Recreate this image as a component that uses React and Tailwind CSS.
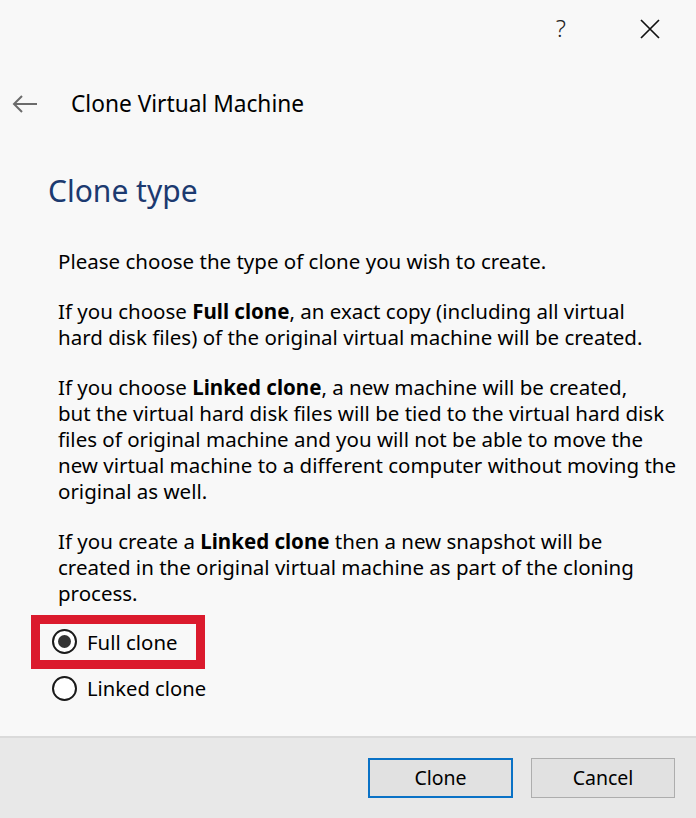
import React, { useState } from "react";

const Radio = ({ checked }) => (
  <span className="w-[25px] h-[25px] rounded-full border-2 border-[#1a1a1a] bg-white flex items-center justify-center shrink-0">
    {checked && <span className="w-[13px] h-[13px] rounded-full bg-[#333333]" />}
  </span>
);

export default function App() {
  const [type, setType] = useState("full");

  return (
    <div className="w-[696px] h-[818px] bg-[#f8f8f8] flex flex-col text-black font-['Noto_Sans',sans-serif]">
      {/* title bar */}
      <div className="h-[55px] flex justify-end items-center pr-[36px] gap-[74px]">
        <span className="text-[24px] font-light text-[#222]">?</span>
        <svg width="20" height="20" viewBox="0 0 20 20" className="mt-[2px]">
          <path d="M1 1 L19 19 M19 1 L1 19" stroke="#111" strokeWidth="1.7" fill="none" />
        </svg>
      </div>

      {/* header */}
      <div className="flex items-center mt-[35px] h-[28px]">
        <svg width="26" height="18" viewBox="0 0 26 18" className="ml-[12px]">
          <path d="M25 9 H2 M10 1 L2 9 L10 17" stroke="#6b6b6b" strokeWidth="2" fill="none" />
        </svg>
        <span className="ml-[33px] text-[22.7px]">Clone Virtual Machine</span>
      </div>

      <h1 className="ml-[48px] mt-[55px] text-[30px] leading-[36px] text-[#1c3a70]">Clone type</h1>

      <div className="ml-[58px] mt-[39px] text-[20.5px] leading-[26px] pr-[6px] whitespace-nowrap">
        <p>Please choose the type of clone you wish to create.</p>
        <p className="mt-[24px]">
          If you choose <b>Full clone</b>, an exact copy (including all virtual
          <br />
          hard disk files) of the original virtual machine will be created.
        </p>
        <p className="mt-[24px]">
          If you choose <b>Linked clone</b>, a new machine will be created,
          <br />
          but the virtual hard disk files will be tied to the virtual hard disk
          <br />
          files of original machine and you will not be able to move the
          <br />
          new virtual machine to a different computer without moving the
          <br />
          original as well.
        </p>
        <p className="mt-[24px]">
          If you create a <b>Linked clone</b> then a new snapshot will be
          <br />
          created in the original virtual machine as part of the cloning
          <br />
          process.
        </p>
      </div>

      <div className="ml-[31px] mt-[9px] w-[174px] h-[54px] border-[9px] border-[#db1a2d] flex items-center pl-[12px]">
        <button className="flex items-center gap-[10px] text-[20.4px]" onClick={() => setType("full")}>
          <Radio checked={type === "full"} />
          <span>Full clone</span>
        </button>
      </div>
      <button className="ml-[52px] mt-[6px] h-[26px] flex items-center gap-[10px] text-[20.2px]" onClick={() => setType("linked")}>
        <Radio checked={type === "linked"} />
        <span>Linked clone</span>
      </button>

      <div className="flex-1" />

      {/* footer */}
      <div className="h-[82px] border-t-2 border-[#dadada] bg-[#e8e8e8] flex justify-end items-center gap-[18px] pr-[21px]">
        <button className="w-[145px] h-[40px] border-2 border-[#0a72c6] bg-[#e1e1e1] text-[19.5px]">Clone</button>
        <button className="w-[144px] h-[40px] border border-[#adadad] bg-[#e1e1e1] text-[19.5px]">Cancel</button>
      </div>
    </div>
  );
}
